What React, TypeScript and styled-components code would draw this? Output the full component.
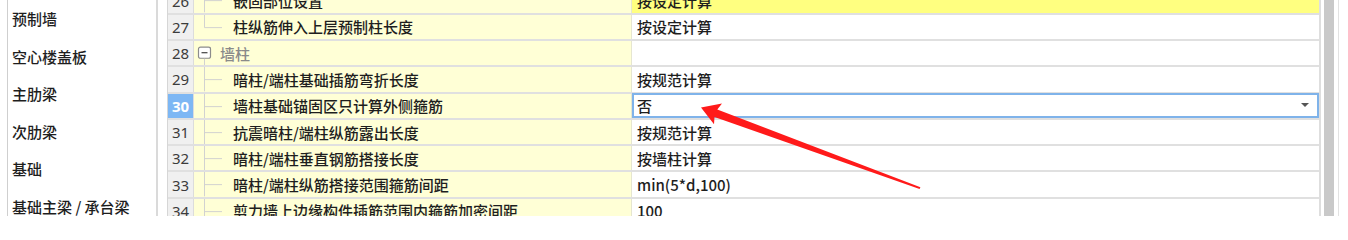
import React from "react";
import styled, { createGlobalStyle } from "styled-components";

const Global = createGlobalStyle`
  html, body { margin: 0; padding: 0; background: #ffffff; }
  body { font-family: "Noto Sans CJK SC", "Noto Sans", sans-serif; font-size: 15px; font-weight: 500; color: #1e1e1e; overflow: hidden; }
  #root { width: 1348px; height: 216px; overflow: hidden; }
`;

const Page = styled.div`
  position: relative;
  display: flex;
  width: 1348px;
  height: 216px;
  overflow: hidden;
  background: #ffffff;
`;

const LeftPanel = styled.div`
  margin-left: 7px;
  width: 148px;
  flex: none;
  border-left: 1px solid #cfcfcf;
  border-right: 2px solid #dadada;
  display: flex;
  flex-direction: column;
`;

const NavItem = styled.div`
  height: 37.5px;
  line-height: 37.5px;
  padding-left: 4px;
  white-space: nowrap;
  color: #1e1e1e;
`;

const Grid = styled.div`
  margin-left: 9px;
  width: 1151px;
  flex: none;
  border-left: 1px solid #d6d6d6;
  border-right: 2px solid #dedede;
  display: flex;
  flex-direction: column;
  margin-top: -11.6px;
`;

const Row = styled.div`
  display: grid;
  grid-template-columns: 26px 438px 1fr;
  height: 26.3px;
  box-sizing: border-box;
  border-bottom: 2px solid #e0e0e0;
  flex: none;
`;

const NumCell = styled.div<{ $selected?: boolean }>`
  display: flex;
  align-items: center;
  justify-content: center;
  background: ${(p) => (p.$selected ? "#7db7f4" : "#f0f0f0")};
  color: ${(p) => (p.$selected ? "#ffffff" : "#3c3c3c")};
  font-family: "Noto Sans", sans-serif;
  font-weight: ${(p) => (p.$selected ? 700 : 400)};
  font-size: 15px;
  border-right: 1px solid #dcdcdc;
`;

const TreeCell = styled.div`
  display: flex;
  align-items: center;
  background: #ffffd6;
  border-right: 1px solid #e6e6d0;
  white-space: nowrap;
  overflow: hidden;
`;

const Guide = styled.svg`
  flex: none;
  width: 39px;
  height: 100%;
  display: block;
`;

const GroupGuide = styled.svg`
  flex: none;
  width: 26px;
  height: 100%;
  display: block;
`;

const Label = styled.span<{ $group?: boolean }>`
  color: ${(p) => (p.$group ? "#8a8a8a" : "#1e1e1e")};
`;

const ValueCell = styled.div<{ $highlight?: boolean; $selected?: boolean }>`
  position: relative;
  display: flex;
  align-items: center;
  box-sizing: border-box;
  padding-left: ${(p) => (p.$selected ? "3px" : "5px")};
  background: ${(p) => (p.$highlight ? "#ffff80" : "#ffffff")};
  border: ${(p) => (p.$selected ? "2px solid #7fb3ea" : "none")};
  margin-top: ${(p) => (p.$selected ? "-1px" : "0")};
  height: ${(p) => (p.$selected ? "calc(100% + 1px)" : "100%")};
  white-space: nowrap;
  justify-content: space-between;
  padding-right: 8px;
`;

const Caret = styled.span`
  width: 0;
  height: 0;
  border-left: 4px solid transparent;
  border-right: 4px solid transparent;
  border-top: 4px solid #555;
`;

const ScrollZone = styled.div`
  flex: none;
  display: flex;
  padding-left: 3px;
`;

const ScrollTrack = styled.div`
  width: 10px;
  background: #c9c9c9;
`;

const OuterEdge = styled.div`
  margin-left: 4px;
  width: 26px;
  border-left: 1px solid #e2e2e2;
`;

const ArrowLayer = styled.svg`
  position: absolute;
  left: 0;
  top: 0;
  width: 1348px;
  height: 216px;
  pointer-events: none;
`;

type RowData = {
  n: number;
  label: string;
  value?: string;
  kind: "mid" | "last" | "group";
  highlight?: boolean;
  selected?: boolean;
};

const rows: RowData[] = [
  { n: 26, label: "嵌固部位设置", value: "按设定计算", kind: "mid", highlight: true },
  { n: 27, label: "柱纵筋伸入上层预制柱长度", value: "按设定计算", kind: "last" },
  { n: 28, label: "墙柱", kind: "group" },
  { n: 29, label: "暗柱/端柱基础插筋弯折长度", value: "按规范计算", kind: "mid" },
  { n: 30, label: "墙柱基础锚固区只计算外侧箍筋", value: "否", kind: "mid", selected: true },
  { n: 31, label: "抗震暗柱/端柱纵筋露出长度", value: "按规范计算", kind: "mid" },
  { n: 32, label: "暗柱/端柱垂直钢筋搭接长度", value: "按墙柱计算", kind: "mid" },
  { n: 33, label: "暗柱/端柱纵筋搭接范围箍筋间距", value: "min(5*d,100)", kind: "mid" },
  { n: 34, label: "剪力墙上边缘构件插筋范围内箍筋加密间距", value: "100", kind: "mid" },
];

const nav = ["预制墙", "空心楼盖板", "主肋梁", "次肋梁", "基础", "基础主梁 / 承台梁"];

function TreeGuide({ kind }: { kind: RowData["kind"] }) {
  if (kind === "group") {
    return (
      <GroupGuide viewBox="0 0 26 26" preserveAspectRatio="none">
        <rect x="4.5" y="6.5" width="12" height="12" rx="2" fill="#fff" stroke="#8c8c8c" strokeWidth="1.2" />
        <line x1="7.5" y1="12.5" x2="13.5" y2="12.5" stroke="#555" strokeWidth="1.4" />
        <line x1="10.5" y1="19" x2="10.5" y2="26" stroke="#d0d0d0" strokeWidth="1" />
      </GroupGuide>
    );
  }
  return (
    <Guide viewBox="0 0 39 26" preserveAspectRatio="none">
      <line x1="10.5" y1="0" x2="10.5" y2={kind === "last" ? 13.5 : 26} stroke="#d0d0d0" strokeWidth="1" />
      <line x1="10.5" y1="13.5" x2="28" y2="13.5" stroke="#d0d0d0" strokeWidth="1" />
    </Guide>
  );
}

export default function App() {
  return (
    <>
      <Global />
      <Page>
        <LeftPanel>
          {nav.map((t) => (
            <NavItem key={t}>{t}</NavItem>
          ))}
        </LeftPanel>
        <Grid>
          {rows.map((r) => (
            <Row key={r.n}>
              <NumCell $selected={r.selected}>{r.n}</NumCell>
              <TreeCell>
                <TreeGuide kind={r.kind} />
                <Label $group={r.kind === "group"}>{r.label}</Label>
              </TreeCell>
              <ValueCell $highlight={r.highlight} $selected={r.selected}>
                <span>{r.value ?? ""}</span>
                {r.selected && <Caret />}
              </ValueCell>
            </Row>
          ))}
        </Grid>
        <ScrollZone>
          <ScrollTrack />
          <OuterEdge />
        </ScrollZone>
        <ArrowLayer viewBox="0 0 1348 216">
          <polygon
            points="701,107.5 722,103.5 717.3,109.4 920.4,187.3 919.6,188.9 714.5,116.9 714,124.2"
            fill="#ff1a1a"
          />
        </ArrowLayer>
      </Page>
    </>
  );
}
